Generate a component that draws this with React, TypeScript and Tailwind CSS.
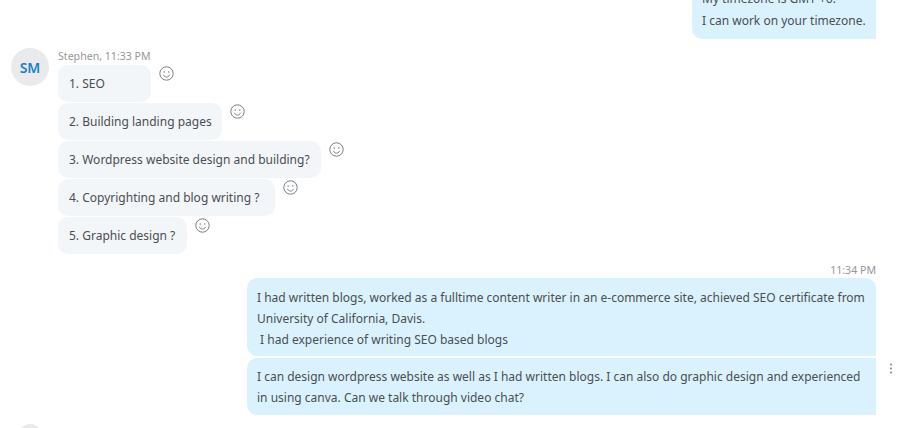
const F = "font-['Noto_Sans',sans-serif]";

function Smile() {
  return (
    <svg width="15" height="15" viewBox="0 0 15 15" fill="none" stroke="#6b7075" strokeWidth="0.9" className="mt-[1px] ml-[8px] shrink-0">
      <circle cx="7.5" cy="7.5" r="6.7" />
      <circle cx="5.2" cy="6" r="0.7" fill="#6b7075" stroke="none" />
      <circle cx="9.8" cy="6" r="0.7" fill="#6b7075" stroke="none" />
      <path d="M4.5 9.2c.8 1.3 1.8 1.9 3 1.9s2.2-.6 3-1.9" strokeLinecap="round" />
    </svg>
  );
}

const left = [
  ["1. SEO", "w-[93px]"],
  ["2. Building landing pages", "w-[164px]"],
  ["3. Wordpress website design and building?", "w-[263px]"],
  ["4. Copyrighting and blog writing ?", "w-[217px]"],
  ["5. Graphic design ?", "w-[129px]"],
];

export default function App() {
  return (
    <div className={`${F} h-[428px] w-[900px] overflow-hidden bg-white text-[12px] text-[#4a4e52]`}>
      <div className="flex justify-end pr-[24px]">
        <div className="mt-[-11px] h-[50px] w-[184px] rounded-bl-[10px] bg-[#daf2fd] px-[10px] leading-[20px]">
          <div className="whitespace-nowrap">My timezone is GMT +6.</div>
          <div className="mt-[2px] whitespace-nowrap">I can work on your timezone.</div>
        </div>
      </div>

      <div className="mt-[9px] flex pl-[11px]">
        <div className="flex h-[38px] w-[38px] items-center justify-center rounded-full bg-[#e9eaec] text-[14px] font-semibold text-[#1b7fc9]">
          SM
        </div>
        <div className="ml-[9px] flex flex-col">
          <div className="h-[17px] text-[10.6px] leading-[17px] text-[#94979a]">Stephen, 11:33 PM</div>
          <div className="flex flex-col gap-[1px]">
            {left.map(([text, w]) => (
              <div key={text} className="flex items-start">
                <div className={`flex h-[37px] ${w} items-center whitespace-nowrap rounded-[10px] bg-[#f3f6f9] pl-[11px]`}>{text}</div>
                <Smile />
              </div>
            ))}
          </div>
        </div>
      </div>

      <div className="mt-[9px] flex flex-col items-end pr-[24px]">
        <div className="h-[15px] text-[10.6px] leading-[15px] text-[#94979a]">11:34 PM</div>
        <div className="relative flex w-[629px] flex-col gap-[2px]">
          <div className="h-[78px] rounded-[10px] rounded-br-none bg-[#daf2fd] pl-[10px] pt-[9px] leading-[21px] whitespace-nowrap">
            <div>I had written blogs, worked as a fulltime content writer in an e-commerce site, achieved SEO certificate from</div>
            <div>University of California, Davis.</div>
            <div>&nbsp;I had experience of writing SEO based blogs</div>
          </div>
          <div className="h-[57px] rounded-l-[10px] bg-[#daf2fd] pl-[10px] pt-[9px] leading-[20.5px] whitespace-nowrap">
            <div>I can design wordpress website as well as I had written blogs. I can also do graphic design and experienced</div>
            <div>in using canva. Can we talk through video chat?</div>
          </div>
          <svg width="4" height="11" viewBox="0 0 4 11" fill="#80858a" className="absolute right-[-17px] top-[85px]">
            <circle cx="2" cy="1.5" r="1" />
            <circle cx="2" cy="5.5" r="1" />
            <circle cx="2" cy="9.5" r="1" />
          </svg>
        </div>
      </div>

      <div className="ml-[18px] mt-[9px] h-[24px] w-[24px] rounded-full bg-[#e9eaec]" />
    </div>
  );
}
